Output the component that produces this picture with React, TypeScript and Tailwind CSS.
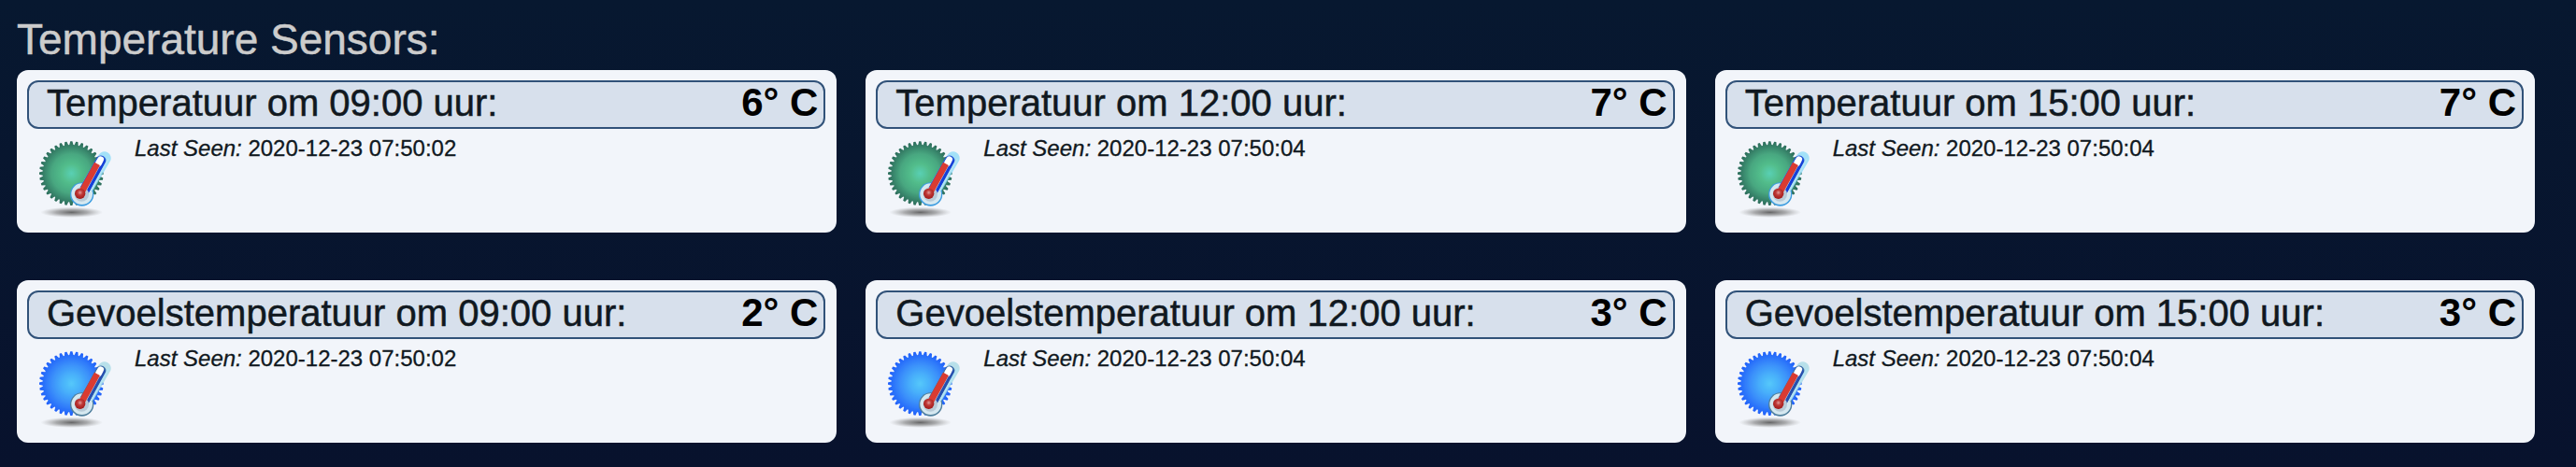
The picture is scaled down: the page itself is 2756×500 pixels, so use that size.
const sensors = [
  { name: "Temperatuur om 09:00 uur:", value: "6° C", seen: "2020-12-23 07:50:02", tone: "green" },
  { name: "Temperatuur om 12:00 uur:", value: "7° C", seen: "2020-12-23 07:50:04", tone: "green" },
  { name: "Temperatuur om 15:00 uur:", value: "7° C", seen: "2020-12-23 07:50:04", tone: "green" },
  { name: "Gevoelstemperatuur om 09:00 uur:", value: "2° C", seen: "2020-12-23 07:50:02", tone: "blue" },
  { name: "Gevoelstemperatuur om 12:00 uur:", value: "3° C", seen: "2020-12-23 07:50:04", tone: "blue" },
  { name: "Gevoelstemperatuur om 15:00 uur:", value: "3° C", seen: "2020-12-23 07:50:04", tone: "blue" },
];

const TEETH = 36;

function gearPoints(cx: number, cy: number, outer: number, inner: number) {
  const pts: string[] = [];
  for (let i = 0; i < TEETH; i++) {
    const mid = (i / TEETH) * Math.PI * 2 - Math.PI / 2;
    const step = (Math.PI * 2) / TEETH;
    const corners: [number, number][] = [
      [inner, -0.4],
      [outer, -0.18],
      [outer, 0.18],
      [inner, 0.4],
    ];
    for (const [r, k] of corners) {
      const a = mid + step * k;
      pts.push(`${(cx + r * Math.cos(a)).toFixed(1)},${(cy + r * Math.sin(a)).toFixed(1)}`);
    }
  }
  return pts.join(" ");
}

const gear = gearPoints(139, 137, 103, 92);

function SensorIcon({ tone, id }: { tone: string; id: string }) {
  const green = tone === "green";
  const stops = green
    ? ["#5ad0b4", "#52bd8b", "#48a780", "#2c6c5b"]
    : ["#55c8fa", "#48b0fa", "#3a8efa", "#2060fa"];
  return (
    <svg viewBox="0 0 300 300" className="h-[100px] w-[100px] shrink-0">
      <defs>
        <radialGradient id={`g${id}`} gradientUnits="userSpaceOnUse" cx="139" cy="137" r="102">
          <stop offset="0" stopColor={stops[0]} />
          <stop offset="0.3" stopColor={stops[1]} />
          <stop offset="0.62" stopColor={stops[2]} />
          <stop offset="1" stopColor={stops[3]} />
        </radialGradient>
        <radialGradient id={`s${id}`}>
          <stop offset="0" stopColor="#555" stopOpacity="0.9" />
          <stop offset="0.5" stopColor="#777" stopOpacity="0.6" />
          <stop offset="1" stopColor="#999" stopOpacity="0" />
        </radialGradient>
        <radialGradient id={`b${id}`} cx="0.5" cy="0.4" r="0.6">
          <stop offset="0" stopColor="#e09a9a" />
          <stop offset="0.4" stopColor="#c03a38" />
          <stop offset="1" stopColor="#a01818" />
        </radialGradient>
        <filter id={`f${id}`} x="-20%" y="-20%" width="140%" height="140%">
          <feGaussianBlur stdDeviation="1.8" />
        </filter>
      </defs>
      <ellipse cx="140" cy="262" rx="100" ry="17" fill={`url(#s${id})`} />
      <g filter={`url(#f${id})`}>
        <polygon points={gear} fill={`url(#g${id})`} />
        <path d="M182 196 L245 88" stroke={green ? "#8fdcf8" : "#a9dbe6"} strokeWidth="42" strokeLinecap="round" opacity="0.8" />
        <circle cx="173" cy="204" r="38" fill={green ? "#3c9ce0" : "#4f7f9c"} />
        <circle cx="173" cy="203" r="34" fill="#d5e8f0" />
        <path d="M179 194 L234 96" stroke={green ? "#2456d4" : "#3a6aa8"} strokeWidth="33" strokeLinecap="round" />
        <path d="M176 206 L230 100" stroke="#bfdcf0" strokeWidth="23" strokeLinecap="round" />
        <path d="M192 194 L244 98" stroke={green ? "#1840d8" : "#2850b0"} strokeWidth="9" strokeLinecap="round" />
        <path d="M204 190 L257 92" stroke="#b4e4f4" strokeWidth="6" strokeLinecap="round" />
        <circle cx="172" cy="204" r="23" fill="#b8cbd8" />
        <path d="M227 104 L233 92" stroke="#fff" strokeWidth="20" strokeLinecap="round" />
        <path d="M172 197 L222 106" stroke="#d93a30" strokeWidth="20" />
        <circle cx="167" cy="202" r="17" fill={`url(#b${id})`} />
      </g>
    </svg>
  );
}

export default function App() {
  return (
    <main className="h-[500px] w-[2756px] overflow-hidden bg-linear-to-b from-[#071830] to-[#08122d] pl-[18px] pr-[44px] font-['Liberation_Sans',Arial,sans-serif]">
      <h1 className="h-[75px] pt-[16px] text-[46px] leading-[52px] text-[#cccccc] [-webkit-text-stroke:0.5px]">Temperature Sensors:</h1>
      <section className="grid grid-cols-3 gap-x-[31px] gap-y-[51px]">
        {sensors.map((s, i) => (
          <article key={s.name} className="h-[174px] rounded-[12px] bg-[#f2f5fa] pl-[11px] pr-[12px] pt-[11px]">
            <header className="flex h-[52px] items-start justify-between rounded-[12px] border-2 border-[#315279] bg-[#d7e0ec] pl-[19px] pr-[6px]">
              <h2 className="text-[40px] leading-[44px] text-[#101820] [-webkit-text-stroke:0.5px]">{s.name}</h2>
              <span className="text-[42px] font-bold leading-[44px] text-black">{s.value}</span>
            </header>
            <div className="flex">
              <div className="mt-[2px] ml-[1px]">
                <SensorIcon tone={s.tone} id={String(i)} />
              </div>
              <p className="ml-[14px] mt-[7px] text-[24px] leading-[27px] text-[#101820] [-webkit-text-stroke:0.3px]">
                <em>Last Seen:</em> {s.seen}
              </p>
            </div>
          </article>
        ))}
      </section>
    </main>
  );
}
